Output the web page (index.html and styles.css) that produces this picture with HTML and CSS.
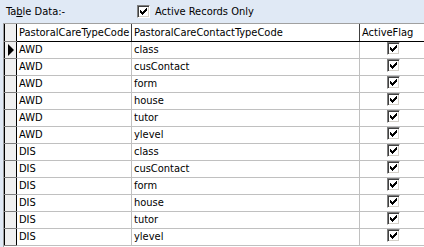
FILE: index.html
```html
<!DOCTYPE html>
<html>
<head>
<meta charset="utf-8">
<link rel="stylesheet" href="styles.css">
</head>
<body>
<div class="bar">
  <span class="title">Ta<u>b</u>le Data:-</span>
  <label class="active"><span class="cb"><svg viewBox="0 0 9 9" width="9" height="9"><path d="M1 3h1v1h1v1h1v-1h1v-1h1v-1h1v-1h1v3h-1v1h-1v1h-1v1h-1v1h-1v-1h-1v-1h-1z"/></svg></span>Active Records Only</label>
</div>
<div class="grid">
  <table>
    <colgroup><col class="c0"><col class="c1"><col class="c2"><col class="c3"></colgroup>
    <thead>
      <tr><th class="sel"></th><th>PastoralCareTypeCode</th><th>PastoralCareContactTypeCode</th><th>ActiveFlag</th></tr>
    </thead>
    <tbody>
      <tr><td class="sel"><span class="arrow"></span></td><td>AWD</td><td>class</td><td class="chk"><span class="cb"><svg viewBox="0 0 9 9" width="9" height="9"><path d="M1 3h1v1h1v1h1v-1h1v-1h1v-1h1v-1h1v3h-1v1h-1v1h-1v1h-1v1h-1v-1h-1v-1h-1z"/></svg></span></td></tr>
      <tr><td class="sel"></td><td>AWD</td><td>cusContact</td><td class="chk"><span class="cb"><svg viewBox="0 0 9 9" width="9" height="9"><path d="M1 3h1v1h1v1h1v-1h1v-1h1v-1h1v-1h1v3h-1v1h-1v1h-1v1h-1v1h-1v-1h-1v-1h-1z"/></svg></span></td></tr>
      <tr><td class="sel"></td><td>AWD</td><td>form</td><td class="chk"><span class="cb"><svg viewBox="0 0 9 9" width="9" height="9"><path d="M1 3h1v1h1v1h1v-1h1v-1h1v-1h1v-1h1v3h-1v1h-1v1h-1v1h-1v1h-1v-1h-1v-1h-1z"/></svg></span></td></tr>
      <tr><td class="sel"></td><td>AWD</td><td>house</td><td class="chk"><span class="cb"><svg viewBox="0 0 9 9" width="9" height="9"><path d="M1 3h1v1h1v1h1v-1h1v-1h1v-1h1v-1h1v3h-1v1h-1v1h-1v1h-1v1h-1v-1h-1v-1h-1z"/></svg></span></td></tr>
      <tr><td class="sel"></td><td>AWD</td><td>tutor</td><td class="chk"><span class="cb"><svg viewBox="0 0 9 9" width="9" height="9"><path d="M1 3h1v1h1v1h1v-1h1v-1h1v-1h1v-1h1v3h-1v1h-1v1h-1v1h-1v1h-1v-1h-1v-1h-1z"/></svg></span></td></tr>
      <tr><td class="sel"></td><td>AWD</td><td>ylevel</td><td class="chk"><span class="cb"><svg viewBox="0 0 9 9" width="9" height="9"><path d="M1 3h1v1h1v1h1v-1h1v-1h1v-1h1v-1h1v3h-1v1h-1v1h-1v1h-1v1h-1v-1h-1v-1h-1z"/></svg></span></td></tr>
      <tr><td class="sel"></td><td>DIS</td><td>class</td><td class="chk"><span class="cb"><svg viewBox="0 0 9 9" width="9" height="9"><path d="M1 3h1v1h1v1h1v-1h1v-1h1v-1h1v-1h1v3h-1v1h-1v1h-1v1h-1v1h-1v-1h-1v-1h-1z"/></svg></span></td></tr>
      <tr><td class="sel"></td><td>DIS</td><td>cusContact</td><td class="chk"><span class="cb"><svg viewBox="0 0 9 9" width="9" height="9"><path d="M1 3h1v1h1v1h1v-1h1v-1h1v-1h1v-1h1v3h-1v1h-1v1h-1v1h-1v1h-1v-1h-1v-1h-1z"/></svg></span></td></tr>
      <tr><td class="sel"></td><td>DIS</td><td>form</td><td class="chk"><span class="cb"><svg viewBox="0 0 9 9" width="9" height="9"><path d="M1 3h1v1h1v1h1v-1h1v-1h1v-1h1v-1h1v3h-1v1h-1v1h-1v1h-1v1h-1v-1h-1v-1h-1z"/></svg></span></td></tr>
      <tr><td class="sel"></td><td>DIS</td><td>house</td><td class="chk"><span class="cb"><svg viewBox="0 0 9 9" width="9" height="9"><path d="M1 3h1v1h1v1h1v-1h1v-1h1v-1h1v-1h1v3h-1v1h-1v1h-1v1h-1v1h-1v-1h-1v-1h-1z"/></svg></span></td></tr>
      <tr><td class="sel"></td><td>DIS</td><td>tutor</td><td class="chk"><span class="cb"><svg viewBox="0 0 9 9" width="9" height="9"><path d="M1 3h1v1h1v1h1v-1h1v-1h1v-1h1v-1h1v3h-1v1h-1v1h-1v1h-1v1h-1v-1h-1v-1h-1z"/></svg></span></td></tr>
      <tr><td class="sel"></td><td>DIS</td><td>ylevel</td><td class="chk"><span class="cb"><svg viewBox="0 0 9 9" width="9" height="9"><path d="M1 3h1v1h1v1h1v-1h1v-1h1v-1h1v-1h1v3h-1v1h-1v1h-1v1h-1v1h-1v-1h-1v-1h-1z"/></svg></span></td></tr>
    </tbody>
  </table>
</div>
</body>
</html>
```
FILE: styles.css
```css
html, body { margin: 0; padding: 0; }
body {
  width: 424px; height: 247px; overflow: hidden;
  background: #e0e9f5;
  font-family: "DejaVu Sans Condensed", "DejaVu Sans", sans-serif;
  font-stretch: semi-condensed;
  font-size: 11px;
  color: #000;
}
.bar {
  height: 23px;
  display: flex;
  align-items: center;
  padding-left: 6px;
  box-sizing: border-box;
  padding-bottom: 1px;
}
.title { width: 131px; }
.active { display: flex; align-items: center; gap: 5px; }
.cb {
  display: inline-block;
  box-sizing: border-box;
  width: 13px; height: 13px;
  border-top: 1px solid #808080; border-left: 1px solid #808080;
  border-right: 1px solid #fff; border-bottom: 1px solid #fff;
  background: #fff;
  vertical-align: middle;
  box-shadow: inset 1px 1px 0 #404040, inset -1px -1px 0 #d4d0c8;
  padding: 1px;
}
.cb svg { display: block; shape-rendering: crispEdges; }
.grid {
  margin-left: 3px;
  background: #fff;
  border-left: 1px solid #a0a0a0;
  border-top: 1px solid #a0a0a0;
  height: 230px;
  overflow: hidden;
}
table {
  border-collapse: collapse;
  table-layout: fixed;
  width: 422px;
  background: #fff;
}
.c0 { width: 12px; }
.c1 { width: 115px; }
.c2 { width: 228px; }
.c3 { width: 67px; }
th, td {
  height: 16px;
  padding: 0 0 0 2px;
  border: 1px solid #c0c0c0;
  text-align: left;
  font-weight: normal;
  white-space: nowrap;
  overflow: hidden;
  line-height: 16px;
}
th {
  height: 17px;
  border-top: none;
  border-bottom: 1px solid #000;
  border-right: 1px solid #404040;
}
td.sel, th.sel {
  background: #f0f0f0;
  border-right: 1px solid #000;
  border-left: 1px solid #000;
  border-bottom-color: #808080;
  padding: 0;
}
td.chk { text-align: center; padding: 0; }
td.chk .cb { vertical-align: -2px; }
.arrow {
  display: block;
  width: 0; height: 0;
  margin-left: 3px;
  border-top: 6px solid transparent;
  border-bottom: 6px solid transparent;
  border-left: 6px solid #000;
}
```
